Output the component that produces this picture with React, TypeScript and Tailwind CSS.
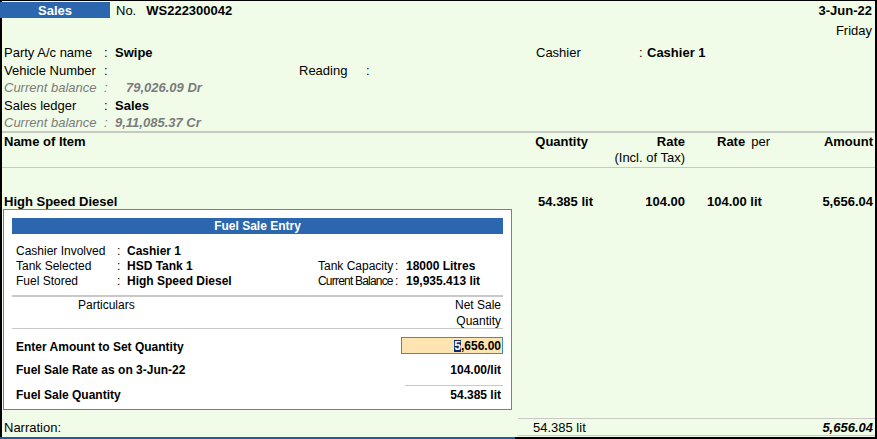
import React from "react";

const FONT = "font-['Liberation_Sans',Arial,sans-serif]";

function InfoRow({ label, value, muted, valuePad }: { label: string; value: string; muted?: boolean; valuePad?: string }) {
  return (
    <div className={`flex items-center ${muted ? "text-[#7b7b7b] italic" : ""}`}>
      <span className="w-[102px] pl-[2px] whitespace-nowrap">{label}</span>
      <span className="w-[11px]">:</span>
      <span className={`font-bold whitespace-nowrap ${valuePad ?? ""}`}>{value}</span>
    </div>
  );
}

function FuelSaleEntry() {
  return (
    <div className="absolute left-[3px] top-[209px] w-[509px] h-[201px] bg-white border border-[#7f7f7f] px-[8px] pt-[8px] text-[12px]">
      <div className="h-[16px] bg-[#2b66ae] text-white font-bold flex items-center justify-center">Fuel Sale Entry</div>

      <div className="mt-[9px] flex flex-col">
        <div className="h-[15px] flex items-center">
          <span className="w-[105px] pl-[4px]">Cashier Involved</span>
          <span className="w-[10px]">:</span>
          <span className="font-bold">Cashier 1</span>
        </div>
        <div className="h-[15px] flex items-center">
          <div className="w-[306px] flex items-center">
            <span className="w-[105px] pl-[4px]">Tank Selected</span>
            <span className="w-[10px]">:</span>
            <span className="font-bold">HSD Tank 1</span>
          </div>
          <span className="w-[77px] whitespace-nowrap">Tank Capacity</span>
          <span className="w-[11px]">:</span>
          <span className="font-bold">18000 Litres</span>
        </div>
        <div className="h-[15px] flex items-center">
          <div className="w-[306px] flex items-center">
            <span className="w-[105px] pl-[4px]">Fuel Stored</span>
            <span className="w-[10px]">:</span>
            <span className="font-bold">High Speed Diesel</span>
          </div>
          <span className="w-[77px] whitespace-nowrap tracking-[-0.8px]">Current Balance</span>
          <span className="w-[11px]">:</span>
          <span className="font-bold">19,935.413 lit</span>
        </div>
      </div>

      <div className="mt-[7px] h-[2px] bg-[#c9c9c9]" />

      <div className="flex justify-between">
        <div className="pl-[66px] h-[16px] flex items-center">Particulars</div>
        <div className="text-right pr-[2px]">
          <div className="h-[16px] flex items-center justify-end">Net Sale</div>
          <div className="h-[15px] flex items-center justify-end">Quantity</div>
        </div>
      </div>

      <div className="h-[1px] bg-[#c9c9c9]" />

      <div className="mt-[8px] h-[17px] flex items-center justify-between font-bold">
        <span className="pl-[4px] pt-[2px]">Enter Amount to Set Quantity</span>
        <div className="w-[102px] h-[17px] border border-[#3d8bd6] bg-[#fde4b0] flex items-center justify-end pr-[1px]">
          <span className="bg-[#0b2a6b] text-white">5</span>
          <span>,656.00</span>
        </div>
      </div>

      <div className="mt-[8px] h-[16px] flex items-center justify-between font-bold">
        <span className="pl-[4px]">Fuel Sale Rate as on 3-Jun-22</span>
        <span className="pr-[2px]">104.00/lit</span>
      </div>

      <div className="mt-[7px] flex justify-end">
        <div className="w-[98px] h-[1px] bg-[#c9c9c9]" />
      </div>

      <div className="h-[17px] flex items-center justify-between font-bold">
        <span className="pl-[4px]">Fuel Sale Quantity</span>
        <span className="pr-[2px]">54.385 lit</span>
      </div>
    </div>
  );
}

export default function App() {
  return (
    <div className={`relative w-[877px] h-[439px] overflow-hidden flex flex-col bg-[#f0fce8] text-black text-[13px] leading-none ${FONT}`}>
      <div className="flex-1 flex flex-col border-t border-l-2 border-r-2 border-black">
        {/* voucher head */}
        <div className="h-[18px] flex items-center">
          <div className="-ml-[2px] w-[110px] h-[16px] bg-[#2b66ae] text-white font-bold flex items-center justify-center">Sales</div>
          <span className="ml-[6px]">No.</span>
          <span className="ml-[10px] font-bold">WS222300042</span>
          <span className="ml-auto pr-[3px] font-bold">3-Jun-22</span>
        </div>
        <div className="h-[22px] flex items-center justify-end pr-[3px]">Friday</div>

        <div className="mt-[2px] flex flex-col">
          <div className="h-[18px] flex items-center">
            <div className="w-[534px]">
              <InfoRow label="Party A/c name" value="Swipe" />
            </div>
            <span className="w-[103px]">Cashier</span>
            <span className="w-[8px]">:</span>
            <span className="font-bold">Cashier 1</span>
          </div>
          <div className="h-[18px] flex items-center">
            <div className="w-[297px] flex items-center">
              <span className="w-[102px] pl-[2px]">Vehicle Number</span>
              <span>:</span>
            </div>
            <span className="w-[67px]">Reading</span>
            <span>:</span>
          </div>
          <div className="h-[17px] flex items-center">
            <InfoRow label="Current balance" value="79,026.09 Dr" muted valuePad="pl-[11px]" />
          </div>
          <div className="h-[18px] flex items-center">
            <InfoRow label="Sales ledger" value="Sales" />
          </div>
          <div className="h-[17px] flex items-center">
            <InfoRow label="Current balance" value="9,11,085.37 Cr" muted />
          </div>
        </div>

        <div className="h-[2px] bg-[#c8c8c4]" />

        {/* item table head */}
        <div className="h-[34px] flex font-bold pt-[1px]">
          <div className="w-[500px] pl-[2px] h-[14px] flex items-center">Name of Item</div>
          <div className="w-[86px] text-right h-[14px] flex items-center justify-end">Quantity</div>
          <div className="w-[99px] pr-[2px] flex flex-col items-end">
            <div className="h-[14px] flex items-center">Rate</div>
            <div className="h-[18px] flex items-center font-normal">(Incl. of Tax)</div>
          </div>
          <div className="w-[100px] pl-[30px] h-[14px] flex items-center">
            Rate<span className="ml-[6px] font-normal">per</span>
          </div>
          <div className="flex-1 pr-[2px] h-[14px] flex items-center justify-end">Amount</div>
        </div>
        <div className="h-[1px] bg-[#c8c8c4]" />

        {/* item row */}
        <div className="mt-[26px] h-[14px] flex items-center font-bold">
          <div className="w-[500px] pl-[2px]">High Speed Diesel</div>
          <div className="w-[91px] text-right">54.385 lit</div>
          <div className="w-[94px] pr-[2px] text-right">104.00</div>
          <div className="w-[100px] pl-[20px]">104.00 lit</div>
          <div className="flex-1 pr-[2px] text-right">5,656.04</div>
        </div>

        <div className="flex-1" />

        {/* totals */}
        <div className="h-[1px] ml-[516px] bg-[#c8c8c4]" />
        <div className="h-[16px] flex items-center">
          <div className="w-[531px] pl-[2px]">Narration:</div>
          <div>54.385 lit</div>
          <div className="ml-auto pr-[2px] font-bold italic">5,656.04</div>
        </div>
        <div className="h-[1px] ml-[516px] bg-[#c8c8c4]" />
        <div className="h-[1px]" />
      </div>
      <div className="h-[2px] flex">
        <div className="w-[515px] bg-[#1d5ca8]" />
        <div className="flex-1 bg-black" />
      </div>

      <FuelSaleEntry />
    </div>
  );
}
